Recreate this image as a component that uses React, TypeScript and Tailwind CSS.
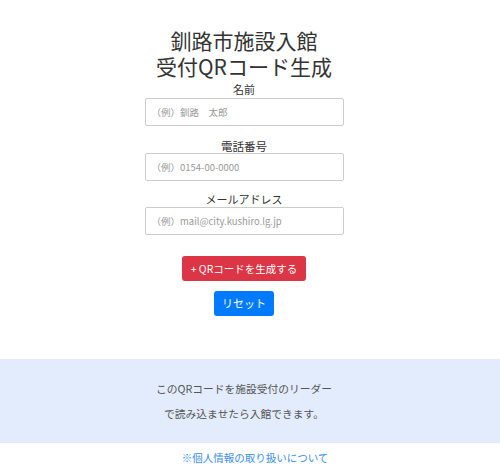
import React from "react";

export default function App() {
  const font = { fontFamily: '"Noto Sans CJK JP", "Noto Sans", sans-serif' };
  const inputCls =
    "w-[199px] h-[28px] border border-[#ccc] rounded-[2px] px-[6px] text-[9.5px] text-[#333] placeholder:text-[#999] outline-none bg-white";
  return (
    <div className="w-[500px] h-[470px] bg-white text-[#333] overflow-hidden" style={font}>
      <div className="w-[488px] flex flex-col items-center pt-[27px]">
        <h1 className="text-[21px] leading-[26px] text-[#333] text-center font-normal">
          釧路市施設入館
          <br />
          受付QRコード生成
        </h1>
        <div className="w-[199px] flex flex-col items-center">
          <label className="mt-[3px] text-[11px] leading-[14px] text-[#333]">名前</label>
          <input className={"mt-[2px] " + inputCls} placeholder="（例）釧路　太郎" />
          <label className="mt-[13px] text-[11.5px] leading-[14px] text-[#333]">電話番号</label>
          <input className={"mt-[0px] " + inputCls} placeholder="（例）0154-00-0000" />
          <label className="mt-[10px] text-[11px] leading-[16px] text-[#333]">メールアドレス</label>
          <input className={"mt-[0px] " + inputCls} placeholder="（例）mail@city.kushiro.lg.jp" />
        </div>
        <button className="mt-[21px] w-[124px] h-[25px] rounded-[3px] bg-[#dc3545] text-white text-[10.5px] leading-[25px] whitespace-nowrap">
          + QRコードを生成する
        </button>
        <button className="mt-[10px] w-[60px] h-[25px] rounded-[3px] bg-[#007bff] text-white text-[11px] leading-[25px]">
          リセット
        </button>
      </div>
      <div className="mt-[43px] h-[84px] bg-[#e3ecfd] flex flex-col justify-center">
        <div className="w-[488px] flex flex-col items-center text-[10.75px] text-[#555]">
          <p className="leading-[16px]">このQRコードを施設受付のリーダー</p>
          <p className="mt-[9px] leading-[16px]">で読み込ませたら入館できます。</p>
        </div>
      </div>
      <div className="text-center pl-[10px]">
        <a className="text-[10.5px] leading-[16px] text-[#3b8fe8]">※個人情報の取り扱いについて</a>
      </div>
    </div>
  );
}
